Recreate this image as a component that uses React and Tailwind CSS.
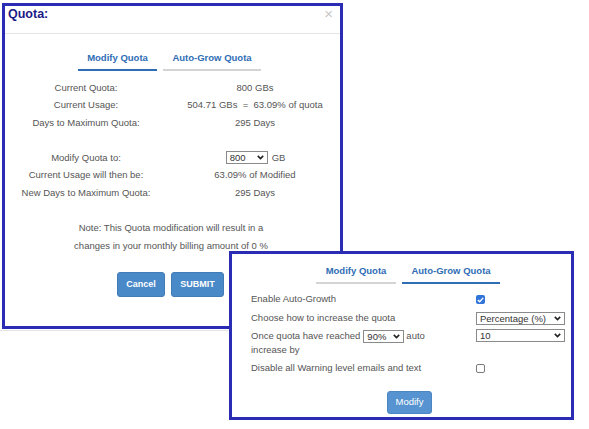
import React from "react";

const Chevron = () => (
  <svg width="7" height="5" viewBox="0 0 7 5" className="shrink-0">
    <path d="M0.8 0.9 L3.5 3.6 L6.2 0.9" fill="none" stroke="#222" strokeWidth="1.6" />
  </svg>
);

const Select = ({ value, className = "" }) => (
  <span
    className={`inline-flex items-center justify-between h-[13px] border border-[#8a8a8a] bg-white pl-[3px] pr-[3px] text-[#333] leading-[11px] ${className}`}
  >
    <span>{value}</span>
    <Chevron />
  </span>
);

const Checkbox = ({ checked }) =>
  checked ? (
    <span className="inline-flex items-center justify-center w-[9px] h-[9px] rounded-[2px] bg-[#2f74d6]">
      <svg width="7" height="6" viewBox="0 0 7 6">
        <path d="M0.8 3 L2.7 4.8 L6.2 0.9" fill="none" stroke="#fff" strokeWidth="1.4" />
      </svg>
    </span>
  ) : (
    <span className="inline-block w-[9px] h-[9px] rounded-[2px] border border-[#7a7a7a] bg-white" />
  );

const Tab = ({ label, active, width }) => (
  <div
    className={`${width} text-center font-bold text-[#2f6db5] leading-[14px] pb-[4px] border-b-2 ${
      active ? "border-[#2f6db5]" : "border-[#d4d4d4]"
    }`}
  >
    {label}
  </div>
);

const infoRows = [
  ["Current Quota:", "800 GBs"],
  ["Current Usage:", "504.71 GBs\u00a0\u00a0=\u00a0\u00a063.09% of quota"],
  ["Days to Maximum Quota:", "295 Days"],
];

const ModifyPanel = () => (
  <div className="absolute left-[2px] top-[3px] w-[341px] h-[326px] border-[3px] border-[#2a2cb4] bg-white flex flex-col">
    {/* header */}
    <div className="relative h-[28px] border-b border-[#e5e5e5] pl-[3px]">
      <div className="text-[12.5px] font-bold leading-[16px] text-[#1b1b86]">Quota:</div>
      <span className="absolute right-[7px] top-0 text-[15px] leading-[16px] text-[#c8c8c8]">×</span>
    </div>

    <div className="flex gap-[6px] pl-[73px] pt-[17px]">
      <Tab label="Modify Quota" active width="w-[79px]" />
      <Tab label="Auto-Grow Quota" width="w-[98px]" />
    </div>

    <div className="mt-[7.5px] grid grid-cols-[162px_176px] leading-[17.5px] text-[#555]">
      {infoRows.map(([label, value]) => (
        <React.Fragment key={label}>
          <div className="text-center">{label}</div>
          <div className="text-center whitespace-nowrap">{value}</div>
        </React.Fragment>
      ))}
      <div className="h-[17.5px] col-span-2" />
      <div className="text-center">Modify Quota to:</div>
      <div className="flex items-center justify-center h-[17.5px]">
        <Select value="800" className="w-[42px] ml-[1px]" />
        <span className="ml-[4px]">GB</span>
      </div>
      <div className="text-center">Current Usage will then be:</div>
      <div className="text-center">63.09% of Modified</div>
      <div className="text-center">New Days to Maximum Quota:</div>
      <div className="text-center">295 Days</div>
    </div>

    <div className="mt-[18px] pr-[3px] text-center leading-[17.5px] text-[#555]">
      <p>Note: This Quota modification will result in a</p>
      <p>changes in your monthly billing amount of 0 %</p>
    </div>

    <div className="mt-[18px] flex justify-center gap-[6px] pr-[4px]">
      <button className="w-[48px] h-[25px] rounded-[3px] bg-[#4a89c8] border border-[#427cb8] text-white font-bold text-[9px]">
        Cancel
      </button>
      <button className="w-[53px] h-[25px] rounded-[3px] bg-[#4a89c8] border border-[#427cb8] text-white font-bold text-[9px]">
        SUBMIT
      </button>
    </div>
  </div>
);

const AutoGrowPanel = () => (
  <div className="absolute left-[229px] top-[251px] w-[345px] h-[169px] border-[3px] border-[#2a2cb4] bg-white pl-[19px] pr-[7px] pt-[10px]">
    <div className="flex gap-[6px] ml-[65px]">
      <Tab label="Modify Quota" width="w-[80px]" />
      <Tab label="Auto-Grow Quota" active width="w-[98px]" />
    </div>

    <div className="mt-[8px] grid grid-cols-[225px_1fr] gap-y-[4px] leading-[14px] text-[#555]">
      <div className="h-[15px]">Enable Auto-Growth</div>
      <div className="h-[15px] flex items-center">
        <Checkbox checked />
      </div>

      <div>Choose how to increase the quota</div>
      <div className="flex items-center h-[14px]">
        <Select value="Percentage (%)" className="w-[89px]" />
      </div>

      <div>
        <div className="flex items-center h-[14px]">
          <span>Once quota have reached</span>
          <Select value="90%" className="w-[41px] ml-[3px] mr-[2px]" />
          <span>auto</span>
        </div>
        <div>increase by</div>
      </div>
      <div>
        <Select value="10" className="w-[89px]" />
      </div>

      <div>Disable all Warning level emails and text</div>
      <div className="flex items-center h-[14px]">
        <Checkbox />
      </div>
    </div>

    <button className="mt-[16px] ml-[136px] w-[45px] h-[23px] rounded-[3px] bg-[#5693d0] border border-[#4c86c2] text-white text-[9.5px]">
      Modify
    </button>
  </div>
);

export default function App() {
  return (
    <div className="relative w-[589px] h-[429px] overflow-hidden bg-white text-[9.5px] font-['Liberation_Sans',Arial,sans-serif]">
      <ModifyPanel />
      <div className="absolute left-0 top-[330px] w-[229px] h-px bg-[#e4e4e4]" />
      <AutoGrowPanel />
    </div>
  );
}
